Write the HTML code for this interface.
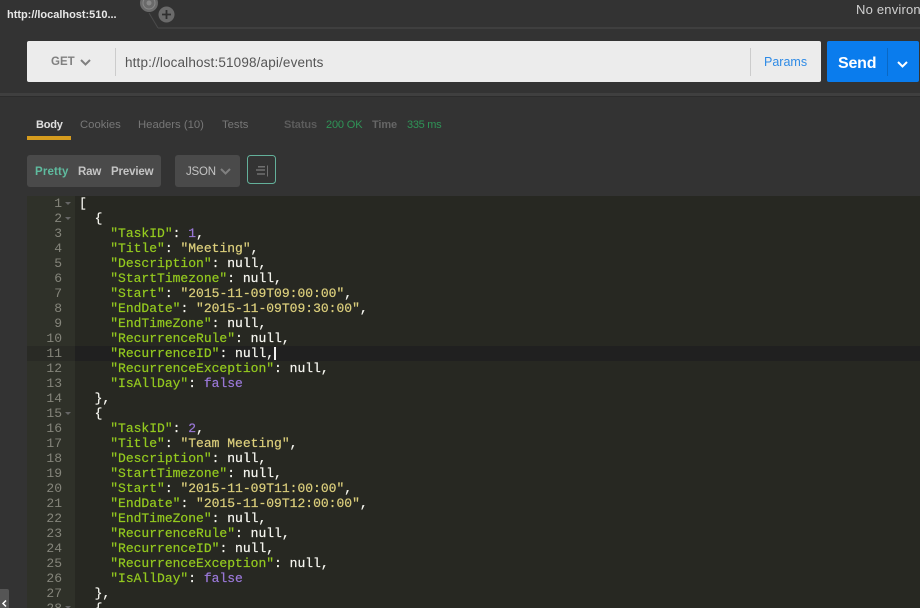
<!DOCTYPE html>
<html>
<head>
<meta charset="utf-8">
<style>
html,body{margin:0;padding:0;background:#333;width:920px;height:608px;overflow:hidden;}
#root{position:relative;width:920px;height:608px;overflow:hidden;font-family:"Liberation Sans",sans-serif;background:#333;}
.a{position:absolute;white-space:nowrap;}
#code{position:absolute;left:79px;top:196px;font:13px/15px "Liberation Mono",monospace;color:#f8f8f2;white-space:pre;-webkit-text-stroke:.2px;}
#nums{position:absolute;left:27px;top:196px;width:35px;text-align:right;font:13px/15px "Liberation Mono",monospace;color:#85857b;white-space:pre;}
.k{color:#94ca1f}.s{color:#dccf7c}.n{color:#9a78d8}
.f{position:absolute;left:65px;width:0;height:0;border-left:3px solid transparent;border-right:3px solid transparent;border-top:3px solid #666;}
</style>
</head>
<body>
<div id="root">
<div class="a" style="left:7px;top:9px;font-size:11px;font-weight:bold;color:#e8e8e8;letter-spacing:-.02px;">http://localhost:510...</div>
<svg class="a" style="left:130px;top:0" width="790" height="30">
  <line x1="28" y1="28" x2="790" y2="28" stroke="#4b4b4b"/>
  <line x1="19" y1="13" x2="28" y2="28" stroke="#4b4b4b"/>
  <circle cx="19" cy="3" r="9" fill="#6a6a6a"/><circle cx="19" cy="3" r="6" fill="none" stroke="#888" stroke-width="1"/><circle cx="19" cy="3" r="2.500" fill="#888"/>
  <circle cx="36.500" cy="14.500" r="8" fill="#6a6a6a"/><path d="M36.500 10v9M32 14.500h9" stroke="#2f2f2f" stroke-width="1.800"/>
</svg>
<div class="a" style="left:856px;top:2px;font-size:13px;letter-spacing:.2px;color:#d0d0d0;">No environ</div>

<div class="a" style="left:27px;top:41px;width:794px;height:41px;background:#ececec;border-radius:2px;"></div>
<div class="a" style="left:51px;top:56px;font-size:11.500px;font-weight:bold;color:#808080;">GET</div>
<svg class="a" style="left:79px;top:58px" width="13" height="9"><path d="M2 2l4.500 4.500L11 2" fill="none" stroke="#808080" stroke-width="2"/></svg>
<div class="a" style="left:115px;top:48px;width:1px;height:28px;background:#ccc;"></div>
<div class="a" style="left:125px;top:55px;font-size:13.500px;letter-spacing:.15px;color:#555;">http://localhost:51098/api/events</div>
<div class="a" style="left:750px;top:48px;width:1px;height:28px;background:#ccc;"></div>
<div class="a" style="left:764px;top:55px;font-size:12.500px;color:#2f8be6;">Params</div>
<div class="a" style="left:827px;top:41px;width:92px;height:41px;background:#0a7ced;border-radius:2px;"></div>
<div class="a" style="left:838px;top:55px;font-size:16px;font-weight:bold;letter-spacing:-.2px;color:#fff;">Send</div>
<div class="a" style="left:887px;top:48px;width:1px;height:28px;background:#0a68c4;"></div>
<svg class="a" style="left:896px;top:60px" width="13" height="9"><path d="M2 2l4.500 4.500L11 2" fill="none" stroke="#fff" stroke-width="2"/></svg>

<div class="a" style="left:0;top:93px;width:920px;height:3px;background:#3f3f3f;border-bottom:1px solid #2c2c2c;"></div>

<div class="a" style="left:36px;top:119px;font-size:11px;font-weight:bold;letter-spacing:-.2px;color:#e0e0e0;">Body</div>
<div class="a" style="left:27px;top:136px;width:44px;height:4px;background:#d69c1e;"></div>
<div class="a" style="left:80px;top:119px;font-size:11.300px;color:#777;">Cookies</div>
<div class="a" style="left:138px;top:119px;font-size:11.300px;color:#777;">Headers (10)</div>
<div class="a" style="left:222px;top:119px;font-size:11.300px;color:#777;">Tests</div>
<div class="a" style="left:284px;top:119px;font-size:11px;font-weight:bold;color:#5c5c5c;letter-spacing:-.1px;">Status</div>
<div class="a" style="left:326px;top:119px;font-size:11px;color:#2f9457;letter-spacing:-.15px;">200 OK</div>
<div class="a" style="left:372px;top:119px;font-size:11px;font-weight:bold;color:#666;letter-spacing:-.1px;">Time</div>
<div class="a" style="left:407px;top:119px;font-size:11px;color:#2f9457;letter-spacing:-.3px;">335 ms</div>

<div class="a" style="left:27px;top:155px;width:134px;height:32px;background:#4a4a4a;border-radius:3px;"></div>
<div class="a" style="left:35px;top:166px;font-size:11.500px;font-weight:bold;color:#5fbb9f;letter-spacing:.15px;">Pretty</div>
<div class="a" style="left:78px;top:166px;font-size:11.500px;font-weight:bold;color:#c4c4c4;letter-spacing:-.15px;">Raw</div>
<div class="a" style="left:111px;top:166px;font-size:11.500px;font-weight:bold;color:#c4c4c4;letter-spacing:-.15px;">Preview</div>
<div class="a" style="left:175px;top:155px;width:65px;height:32px;background:#4a4a4a;border-radius:3px;"></div>
<div class="a" style="left:186px;top:166px;font-size:11.500px;color:#c4c4c4;letter-spacing:-.2px;">JSON</div>
<svg class="a" style="left:219px;top:167px" width="13" height="9"><path d="M2 2l4.500 4.500L11 2" fill="none" stroke="#808080" stroke-width="2"/></svg>
<svg class="a" style="left:247px;top:155px" width="29" height="29">
  <rect x=".5" y=".5" width="28" height="28" rx="3" fill="none" stroke="#63b09a"/>
  <path d="M11 11.700h7M9 15h9M10 19h8" stroke="#707070" stroke-width="1.500"/>
  <path d="M20.500 10.500v11" stroke="#707070" stroke-width="1"/>
</svg>

<div class="a" style="left:27px;top:196px;width:893px;height:412px;background:#272822;"></div>
<div class="a" style="left:27px;top:196px;width:48px;height:412px;background:#2f3129;"></div>
<div class="a" style="left:27px;top:346px;width:48px;height:15px;background:#292a25;"></div>
<div class="a" style="left:75px;top:346px;width:845px;height:15px;background:#202020;"></div>
<div class="a" style="left:274px;top:347px;width:1.500px;height:13px;background:#f0f0f0;"></div>

<div id="nums">1
2
3
4
5
6
7
8
9
10
11
12
13
14
15
16
17
18
19
20
21
22
23
24
25
26
27
28</div>
<div class="f" style="top:202px"></div>
<div class="f" style="top:217px"></div>
<div class="f" style="top:412px"></div>
<div class="f" style="top:606px"></div>

<div id="code">[
  {
    <span class="k">"TaskID"</span>: <span class="n">1</span>,
    <span class="k">"Title"</span>: <span class="s">"Meeting"</span>,
    <span class="k">"Description"</span>: null,
    <span class="k">"StartTimezone"</span>: null,
    <span class="k">"Start"</span>: <span class="s">"2015-11-09T09:00:00"</span>,
    <span class="k">"EndDate"</span>: <span class="s">"2015-11-09T09:30:00"</span>,
    <span class="k">"EndTimeZone"</span>: null,
    <span class="k">"RecurrenceRule"</span>: null,
    <span class="k">"RecurrenceID"</span>: null,
    <span class="k">"RecurrenceException"</span>: null,
    <span class="k">"IsAllDay"</span>: <span class="n">false</span>
  },
  {
    <span class="k">"TaskID"</span>: <span class="n">2</span>,
    <span class="k">"Title"</span>: <span class="s">"Team Meeting"</span>,
    <span class="k">"Description"</span>: null,
    <span class="k">"StartTimezone"</span>: null,
    <span class="k">"Start"</span>: <span class="s">"2015-11-09T11:00:00"</span>,
    <span class="k">"EndDate"</span>: <span class="s">"2015-11-09T12:00:00"</span>,
    <span class="k">"EndTimeZone"</span>: null,
    <span class="k">"RecurrenceRule"</span>: null,
    <span class="k">"RecurrenceID"</span>: null,
    <span class="k">"RecurrenceException"</span>: null,
    <span class="k">"IsAllDay"</span>: <span class="n">false</span>
  },
  {</div>

<div class="a" style="left:0;top:589px;width:9px;height:19px;background:#555;border-radius:0 2px 0 0;"></div>
<svg class="a" style="left:0;top:600px" width="9" height="8"><path d="M6 0.500L3 3.500L6 6.500" fill="none" stroke="#fff" stroke-width="1.500"/></svg>
</div>
</body>
</html>
